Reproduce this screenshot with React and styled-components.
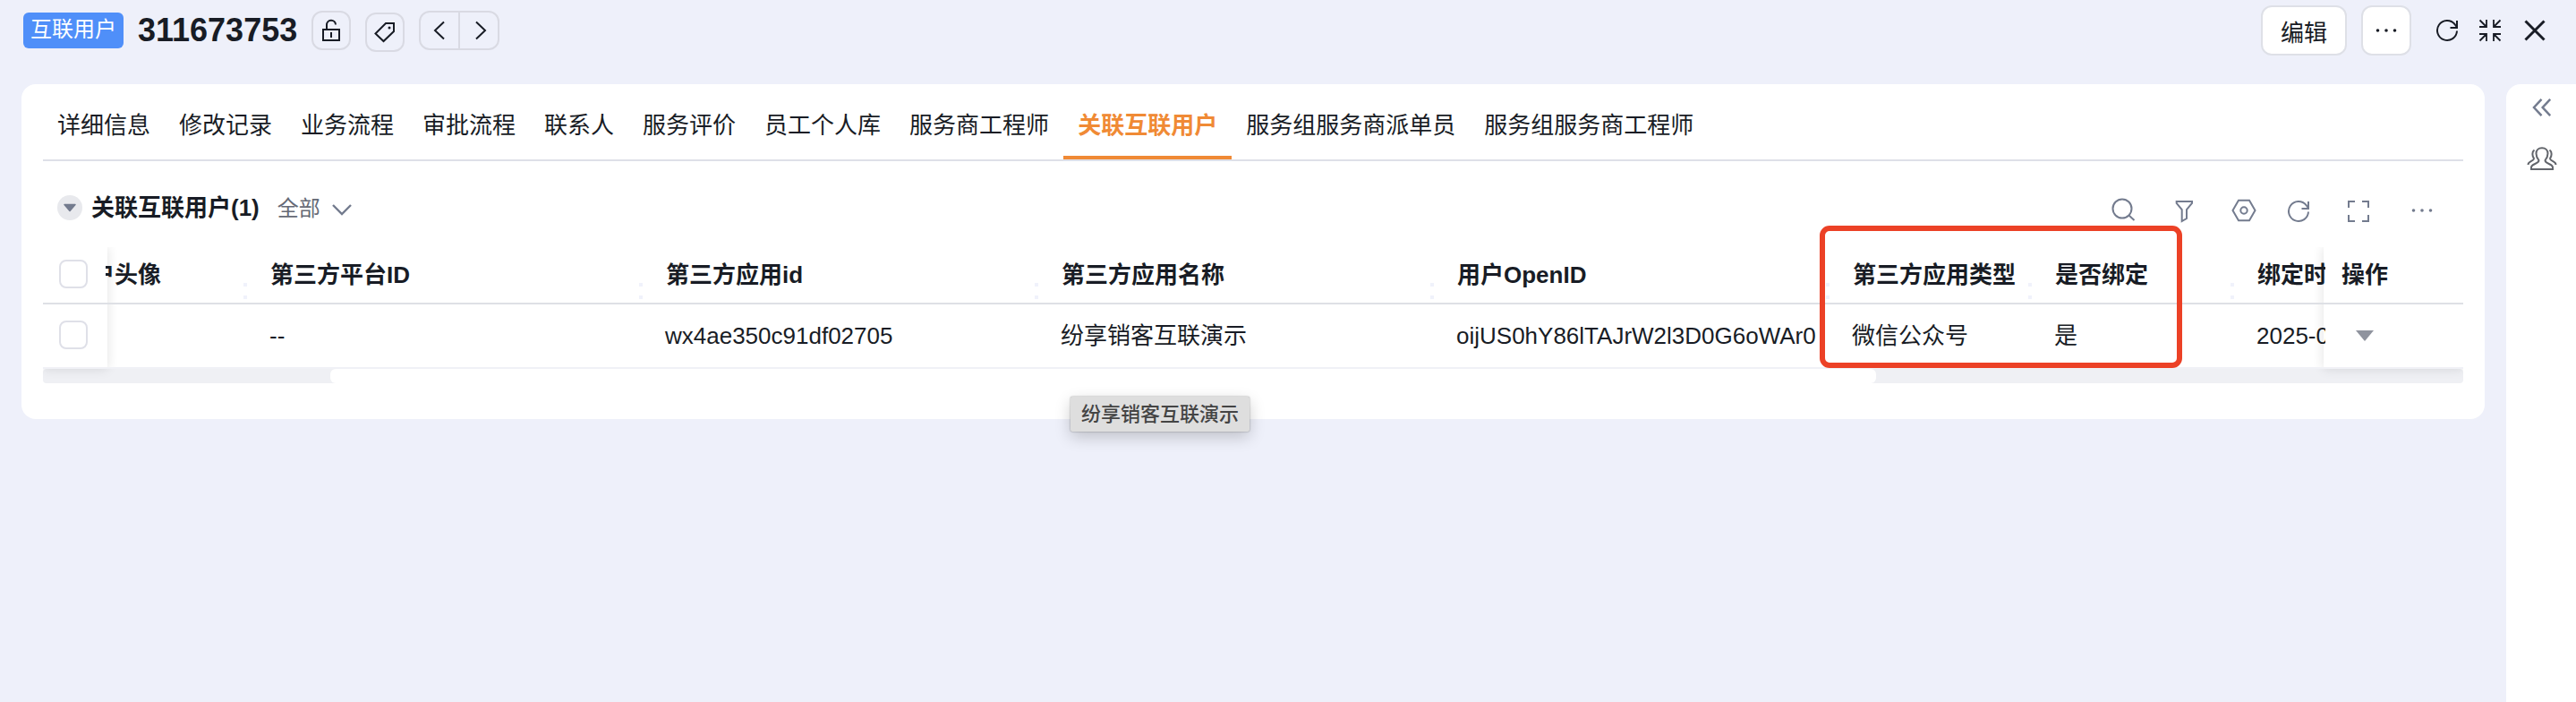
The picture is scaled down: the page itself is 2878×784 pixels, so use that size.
import React from "react";
import styled, { createGlobalStyle } from "styled-components";

const Global = createGlobalStyle`
  *, *::before, *::after { box-sizing: border-box; }
  html, body { margin: 0; background: #eef0fa; }
  body {
    font-family: "Liberation Sans", "Noto Sans CJK SC", sans-serif;
    font-size: 26px;
    color: #181c25;
  }
`;

const Page = styled.div`
  width: 2878px;
  height: 784px;
  overflow: hidden;
  display: flex;
  flex-direction: column;
  background: #eef0fa;
`;

const Header = styled.header`
  height: 94px;
  flex: none;
  display: flex;
  align-items: flex-start;
  justify-content: space-between;
  padding: 0 33px 0 26px;
`;

const HeaderLeft = styled.div`
  display: flex;
  align-items: flex-start;
`;

const Badge = styled.span`
  width: 112px;
  height: 40px;
  margin-top: 14px;
  border-radius: 6px;
  background: #4f8ff9;
  color: #fff;
  font-size: 24px;
  line-height: 38px;
  text-align: center;
`;

const RecordName = styled.h1`
  margin: 12px 14px 0 16px;
  width: 180px;
  font-size: 36px;
  line-height: 44px;
  font-weight: 700;
`;

const IconButton = styled.button`
  width: 44px;
  height: 44px;
  margin: ${(p) => p.$top || 12}px 16px 0 0;
  padding: 0;
  border: 2px solid #d9dae3;
  border-radius: 12px;
  background: transparent;
  display: flex;
  align-items: center;
  justify-content: center;
`;

const Pager = styled.div`
  width: 90px;
  height: 44px;
  margin-top: 12px;
  border: 2px solid #d9dae3;
  border-radius: 12px;
  display: flex;
`;

const PagerStep = styled.div`
  width: 42px;
  display: flex;
  align-items: center;
  justify-content: center;
  & + & {
    width: 44px;
    padding-left: 3px;
    border-left: 2px solid #d9dae3;
  }
`;

const HeaderRight = styled.div`
  display: flex;
  align-items: center;
  padding-top: 6px;
`;

const ActionButton = styled.button`
  width: ${(p) => p.$width}px;
  height: 56px;
  margin-right: ${(p) => p.$gap}px;
  padding: 0;
  border: 2px solid #dee0e7;
  border-radius: 12px;
  background: #fff;
  font: inherit;
  color: inherit;
  display: flex;
  align-items: center;
  justify-content: center;
`;

const HeaderIcon = styled.span`
  display: flex;
  margin-left: ${(p) => p.$gap || 0}px;
`;

const Body = styled.div`
  flex: 1;
  display: flex;
  align-items: stretch;
  justify-content: space-between;
  padding-left: 24px;
`;

const Panel = styled.main`
  width: 2752px;
  height: 374px;
  border-radius: 16px;
  background: #fff;
  padding: 0 24px;
`;

const Sidebar = styled.aside`
  width: 78px;
  border-radius: 16px 0 0 0;
  background: #fff;
  display: flex;
  flex-direction: column;
  align-items: center;
  padding: 14px 0 0 2px;
  gap: 30px;
`;

const Tabs = styled.nav`
  height: 86px;
  display: flex;
  border-bottom: 2px solid #dee0e8;
`;

const Tab = styled.a`
  height: 84px;
  padding: 0 16px;
  line-height: 92px;
  white-space: nowrap;
  ${(p) => p.$active && "color: #f08a35; font-weight: 700; border-bottom: 4px solid #f08a35;"}
`;

const SectionBar = styled.div`
  height: 96px;
  display: flex;
  justify-content: space-between;
  padding: 0 33px 0 16px;
`;

const SectionTitle = styled.div`
  display: flex;
  align-items: center;
  height: 104px;
`;

const Toggle = styled.span`
  width: 28px;
  height: 28px;
  margin-right: 10px;
  border-radius: 50%;
  background: #e8e9ed;
  display: flex;
  align-items: center;
  justify-content: center;
`;

const TitleText = styled.h2`
  margin: 0 20px 0 0;
  font-size: 26px;
  line-height: 36px;
  font-weight: 700;
`;

const Filter = styled.span`
  font-size: 24px;
  line-height: 36px;
  padding-top: 2px;
  color: #666a76;
  margin-right: 12px;
`;

const Chevron = styled.span`
  display: flex;
  padding-top: 4px;
`;

const Tools = styled.div`
  display: flex;
  height: 110px;
  align-items: center;
`;

const Tool = styled.span`
  display: flex;
  margin-left: ${(p) => p.$gap || 0}px;
  padding-top: ${(p) => (p.$low ? 2 : 0)}px;
`;

const Table = styled.div`
  position: relative;
  height: 136px;
`;

const Row = styled.div`
  position: relative;
  height: ${(p) => (p.$head ? 64 : 72)}px;
  display: flex;
  border-bottom: 2px solid ${(p) => (p.$head ? "#dee0e5" : "#f0f1f6")};
  line-height: ${(p) => (p.$head ? 63 : 71)}px;
  font-weight: ${(p) => (p.$head ? 700 : 400)};
`;

const SelectCell = styled.div`
  flex: none;
  width: 70px;
  padding: ${(p) => (p.$head ? 14 : 18)}px 0 0 18px;
`;

const ScrollArea = styled.div`
  flex: 1;
  min-width: 0;
  display: flex;
  overflow: hidden;
`;

const ActionCell = styled.div`
  flex: none;
  width: 154px;
  padding-left: ${(p) => (p.$head ? 18 : 33)}px;
  display: flex;
  align-items: center;
`;

const Cell = styled.div`
  flex: none;
  width: ${(p) => p.$width}px;
  margin-left: -${(p) => p.$scrolled || 0}px;
  padding-left: ${(p) => p.$pad}px;
  display: flex;
  justify-content: space-between;
  white-space: nowrap;
`;

const Resizer = styled.span`
  width: 4px;
  height: 18px;
  margin-top: 40px;
  border: solid #f0f2fb;
  border-width: 4px 0;
`;

const PinShade = styled.div`
  position: absolute;
  top: 0;
  ${(p) => p.$side}: 0;
  width: ${(p) => p.$width}px;
  height: 136px;
  background: #fff;
  box-shadow: 0 0 12px rgba(0, 0, 0, 0.12);
  clip-path: ${(p) => (p.$side === "left" ? "inset(0 -16px -12px 0)" : "inset(0 0 -12px -16px)")};
`;

const Checkbox = styled.span`
  display: block;
  width: 32px;
  height: 32px;
  border: 2px solid #dfe0e8;
  border-radius: 8px;
  background: #fff;
`;

const ScrollTrack = styled.div`
  height: 16px;
  border-radius: 4px;
  background: #eff0f4;
  padding-left: 321px;
`;

const ScrollThumb = styled.div`
  width: 1727px;
  height: 16px;
  border-radius: 6px;
  background: #fff;
`;

const Highlight = styled.div`
  position: absolute;
  left: 1985px;
  top: -24px;
  width: 405px;
  height: 159px;
  border: 6px solid #ec4126;
  border-radius: 11px;
`;

const Tooltip = styled.div`
  position: absolute;
  left: 1148px;
  top: 167px;
  width: 200px;
  height: 39px;
  border-radius: 2px;
  background: #dedede;
  box-shadow: 0 0 2px rgba(0, 0, 0, 0.4), 0 6px 18px rgba(0, 0, 0, 0.2);
  color: #444;
  font-size: 22px;
  font-weight: 500;
  line-height: 40px;
  text-align: center;
`;

function Svg({ w, h, color = "#181c25", sw = 2, children }) {
  return (
    <svg width={w} height={h} viewBox={`0 0 ${w} ${h}`} fill="none" stroke={color} strokeWidth={sw}>
      {children}
    </svg>
  );
}

const GRAY = "#737b8e";

const RefreshIcon = ({ color }) => (
  <Svg w={26} h={26} color={color}>
    <path d="M24 13.5A11 11 0 1 1 21.5 6L24 9.5M24 2v8h-7.5" />
  </Svg>
);

const DotsIcon = ({ color }) => (
  <Svg w={26} h={6} color="none">
    <g fill={color}>
      <circle cx="3.5" cy="3" r="1.8" />
      <circle cx="13" cy="3" r="1.8" />
      <circle cx="22.5" cy="3" r="1.8" />
    </g>
  </Svg>
);

// The first and last columns are partly scrolled under the pinned columns.
const columns = [
  { title: "户头像", value: "", width: 174, pad: 0, scrolled: 16 },
  { title: "第三方平台ID", value: "--", width: 442 },
  { title: "第三方应用id", value: "wx4ae350c91df02705", width: 442 },
  { title: "第三方应用名称", value: "纷享销客互联演示", width: 442 },
  { title: "用户OpenID", value: "oijUS0hY86lTAJrW2l3D0G6oWAr0", width: 442 },
  { title: "第三方应用类型", value: "微信公众号", width: 226 },
  { title: "是否绑定", value: "是", width: 226 },
  { title: "绑定时", value: "2025-0", width: 226 },
];

const tabs = [
  "详细信息", "修改记录", "业务流程", "审批流程", "联系人", "服务评价", "员工个人库",
  "服务商工程师", "关联互联用户", "服务组服务商派单员", "服务组服务商工程师",
];

export default function App() {
  return (
    <Page>
      <Global />
      <Header>
        <HeaderLeft>
          <Badge>互联用户</Badge>
          <RecordName>311673753</RecordName>
          <IconButton>
            <Svg w={24} h={26}>
              <path d="M3 12h18v12H3zM7 12V7a5 5 0 0 1 10-.5M12 15v6" />
            </Svg>
          </IconButton>
          <IconButton $top={14}>
            <Svg w={26} h={26}>
              <path d="M14 3h9v9L11.5 23 2.5 14.5z" />
              <circle cx="18" cy="8" r="1.5" fill="#181c25" stroke="none" />
            </Svg>
          </IconButton>
          <Pager>
            <PagerStep><Svg w={14} h={22}><path d="M12 1.5 2 11l10 9.5" /></Svg></PagerStep>
            <PagerStep><Svg w={14} h={22}><path d="m2 1.5 10 9.5-10 9.5" /></Svg></PagerStep>
          </Pager>
        </HeaderLeft>
        <HeaderRight>
          <ActionButton $width={96} $gap={16}>编辑</ActionButton>
          <ActionButton $width={56} $gap={27}><DotsIcon color="#181c25" /></ActionButton>
          <HeaderIcon><RefreshIcon color="#181c25" /></HeaderIcon>
          <HeaderIcon $gap={22}>
            <Svg w={26} h={26} sw={1.8}>
              <path d="M9 1v8H1M9 9 1.5 1.5M17 1v8h8M17 9l7.500-7.500M9 25v-8H1M9 17l-7.500 7.500M17 25v-8h8M17 17l7.500 7.500" />
            </Svg>
          </HeaderIcon>
          <HeaderIcon $gap={24}>
            <Svg w={26} h={26} sw={3}><path d="m2.5 2.5 21 21m0-21-21 21" /></Svg>
          </HeaderIcon>
        </HeaderRight>
      </Header>
      <Body>
        <Panel>
          <Tabs>
            {tabs.map((t) => <Tab key={t} $active={t === "关联互联用户"}>{t}</Tab>)}
          </Tabs>
          <SectionBar>
            <SectionTitle>
              <Toggle>
                <svg width="16" height="10">
                  <path d="M2 1.5h12L8 8.5z" fill={GRAY} stroke={GRAY} strokeWidth="1.5" strokeLinejoin="round" />
                </svg>
              </Toggle>
              <TitleText>关联互联用户(1)</TitleText>
              <Filter>全部</Filter>
              <Chevron><Svg w={24} h={14} color={GRAY} sw={2.4}><path d="m2 2 10 10L22 2" /></Svg></Chevron>
            </SectionTitle>
            <Tools>
              <Tool><Svg w={28} h={28} color={GRAY}><circle cx="13" cy="12" r="10.5" /><path d="m20.5 19.5 6 5.5" /></Svg></Tool>
              <Tool $gap={42}><Svg w={24} h={28} color={GRAY}><path d="M3.7 4H21v2l-6 7v10l-5.3 3V13l-6-7z" /></Svg></Tool>
              <Tool $gap={41}><Svg w={28} h={26} color={GRAY}><path d="M8 1.8h12L26.5 13 20 24.2H8L1.5 13z" /><circle cx="14" cy="13" r="3.7" /></Svg></Tool>
              <Tool $gap={34} $low><RefreshIcon color={GRAY} /></Tool>
              <Tool $gap={41} $low><Svg w={26} h={26} color={GRAY}><path d="M2 9V2h7M17 2h7v7M24 17v7h-7M9 24H2v-7" /></Svg></Tool>
              <Tool $gap={45}><DotsIcon color={GRAY} /></Tool>
            </Tools>
          </SectionBar>
          <Table>
            <PinShade $side="left" $width={72} />
            <PinShade $side="right" $width={156} />
            {[true, false].map((head) => (
              <Row key={String(head)} $head={head}>
                <SelectCell $head={head}><Checkbox /></SelectCell>
                <ScrollArea>
                  {columns.map((c) => (
                    <Cell key={c.title} $width={c.width} $scrolled={c.scrolled} $pad={c.pad ?? (head ? 26 : 25)}>
                      <span>{head ? c.title : c.value}</span>
                      {head && <Resizer />}
                    </Cell>
                  ))}
                </ScrollArea>
                <ActionCell $head={head}>
                  {head ? "操作" : (
                    <svg width="22" height="14"><path d="M1 1h20L11 13z" fill="#8f939e" /></svg>
                  )}
                </ActionCell>
              </Row>
            ))}
            <Highlight />
            <Tooltip>纷享销客互联演示</Tooltip>
          </Table>
          <ScrollTrack><ScrollThumb /></ScrollTrack>
        </Panel>
        <Sidebar>
          <Svg w={24} h={24} color={GRAY} sw={2.5}><path d="M11.5 2.8 3 12l8.5 9.2M21.2 2.8 12.7 12l8.5 9.2" /></Svg>
          <Svg w={34} h={30} color="#62656b">
            <path d="M5 27v-2c0-4.500 8.500-3.500 8.500-8-2-2.500-3-5-3-7.500 0-3.700 2.500-6.200 6.500-6.200s6.500 2.500 6.500 6.200c0 2.500-1 5-3 7.500 0 4.500 8.500 3.500 8.500 8v2z" />
            <path d="M8.500 5.500c-3 2-2.500 6.500-.5 9.500 0 3-6.500 3-6.500 7M25.500 5.500c3 2 2.500 6.500.5 9.500 0 3 6.500 3 6.500 7" />
          </Svg>
        </Sidebar>
      </Body>
    </Page>
  );
}
